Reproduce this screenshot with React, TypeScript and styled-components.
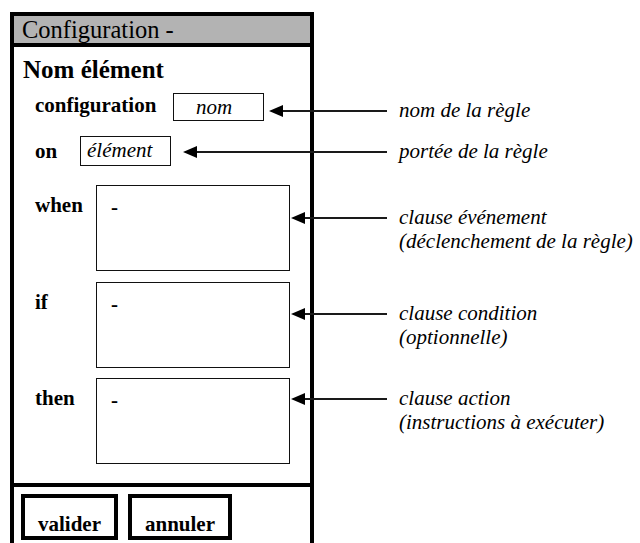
import React from "react";
import styled, { createGlobalStyle, css } from "styled-components";

const serif = css`
  font-family: "Liberation Serif", "Times New Roman", serif;
`;

const GlobalStyle = createGlobalStyle`
  body {
    margin: 0;
    padding: 0;
    overflow: hidden;
    background: #fff;
    color: #000;
    font-family: "Liberation Serif", "Times New Roman", serif;
  }
`;

const Page = styled.div`
  ${serif};
  width: 640px;
  height: 543px;
  overflow: hidden;
  box-sizing: border-box;
  padding: 12px 0 0 10px;
`;

const Frame = styled.div`
  width: 304px;
  box-sizing: border-box;
  border: 4px solid #000;
`;

const TitleBar = styled.div`
  height: 27px;
  background: #b3b3b3;
  border-bottom: 4px solid #000;
  padding-left: 8px;
  font-size: 24.5px;
  line-height: 27px;
  white-space: nowrap;
`;

const Body = styled.div`
  padding-bottom: 19px;
`;

const Heading = styled.div`
  margin-top: 8px;
  padding-left: 9px;
  font-size: 25px;
  font-weight: bold;
  line-height: 30px;
  white-space: nowrap;
`;

const Row = styled.div<{ $top: number }>`
  display: flex;
  align-items: flex-start;
  width: 626px;
  box-sizing: border-box;
  padding-left: 21px;
  margin-top: ${(p) => p.$top}px;
`;

const Label = styled.div<{ $width: number; $offset: number }>`
  width: ${(p) => p.$width}px;
  flex-shrink: 0;
  margin-top: ${(p) => p.$offset}px;
  font-size: 21px;
  font-weight: bold;
  line-height: 24px;
  white-space: nowrap;
`;

const Field = styled.div<{ $height: number; $indent: number }>`
  width: 91px;
  height: ${(p) => p.$height}px;
  flex-shrink: 0;
  box-sizing: border-box;
  border: 1px solid #111;
  padding-left: ${(p) => p.$indent}px;
  font-size: 21px;
  font-style: italic;
  line-height: 26px;
  white-space: nowrap;
`;

const ClauseBox = styled.div`
  width: 194px;
  height: 86px;
  flex-shrink: 0;
  box-sizing: border-box;
  border: 1px solid #111;
  padding: 9px 0 0 14px;
  font-size: 21px;
  font-weight: bold;
  line-height: 24px;
`;

const Callout = styled.div<{ $top: number; $left: number }>`
  flex: 1;
  display: flex;
  align-items: flex-start;
  margin-top: ${(p) => p.$top}px;
  margin-left: ${(p) => p.$left}px;
`;

const Arrow = styled.div`
  flex: 1;
  display: flex;
  align-items: center;
  height: 12px;
  margin-top: 7px;
  margin-right: 12px;
`;

const ArrowHead = styled.div`
  width: 0;
  height: 0;
  flex-shrink: 0;
  border-top: 6px solid transparent;
  border-bottom: 6px solid transparent;
  border-right: 14px solid #000;
`;

const ArrowLine = styled.div`
  flex: 1;
  height: 2px;
  background: #1a1a1a;
`;

const Note = styled.div`
  width: 241px;
  flex-shrink: 0;
  font-size: 21px;
  font-style: italic;
  line-height: 24px;
  white-space: nowrap;
`;

const NoteLine = styled.div``;

const Footer = styled.div`
  display: flex;
  gap: 10px;
  border-top: 4px solid #000;
  padding: 7px 0 8px 7px;
`;

const Button = styled.button`
  ${serif};
  height: 46px;
  box-sizing: border-box;
  border: 4px solid #000;
  border-radius: 0;
  background: #fff;
  color: #000;
  padding: 14px 13px 0;
  margin: 0;
  font-size: 21px;
  font-weight: bold;
  line-height: 24px;
  display: flex;
  align-items: flex-start;
  justify-content: center;
  cursor: pointer;
`;

type CalloutProps = { top: number; left: number; lines: string[] };

const Pointer: React.FC<CalloutProps> = ({ top, left, lines }) => (
  <Callout $top={top} $left={left}>
    <Arrow>
      <ArrowHead />
      <ArrowLine />
    </Arrow>
    <Note>
      {lines.map((l) => (
        <NoteLine key={l}>{l}</NoteLine>
      ))}
    </Note>
  </Callout>
);

const clauses = [
  {
    label: "when",
    top: 19,
    callout: 20,
    lines: ["clause événement", "(déclenchement de la règle)"],
  },
  {
    label: "if",
    top: 11,
    callout: 19,
    lines: ["clause condition", "(optionnelle)"],
  },
  {
    label: "then",
    top: 10,
    callout: 8,
    lines: ["clause action", "(instructions à exécuter)"],
  },
];

export default function App() {
  return (
    <>
      <GlobalStyle />
      <Page>
        <Frame>
          <TitleBar>Configuration -</TitleBar>
          <Body>
            <Heading>Nom élément</Heading>
            <Row $top={8}>
              <Label $width={138} $offset={0}>
                configuration
              </Label>
              <Field $height={28} $indent={22}>
                nom
              </Field>
              <Pointer top={5} left={5} lines={["nom de la règle"]} />
            </Row>
            <Row $top={14}>
              <Label $width={45} $offset={3}>
                on
              </Label>
              <Field $height={30} $indent={6}>
                élément
              </Field>
              <Pointer top={3} left={12} lines={["portée de la règle"]} />
            </Row>
            {clauses.map((c) => (
              <Row key={c.label} $top={c.top}>
                <Label $width={61} $offset={8}>
                  {c.label}
                </Label>
                <ClauseBox>-</ClauseBox>
                <Pointer top={c.callout} left={1} lines={c.lines} />
              </Row>
            ))}
          </Body>
          <Footer>
            <Button type="button">valider</Button>
            <Button type="button">annuler</Button>
          </Footer>
        </Frame>
      </Page>
    </>
  );
}
